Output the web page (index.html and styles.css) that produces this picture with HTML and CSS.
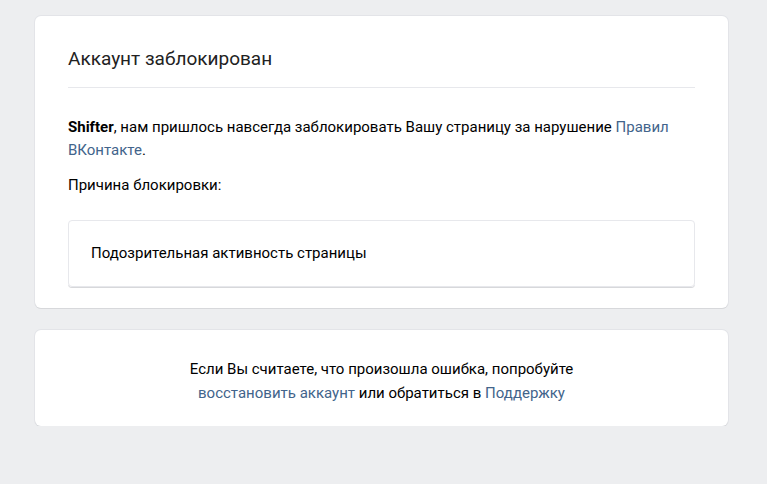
FILE: index.html
```html
<!DOCTYPE html>
<html lang="ru">
<head>
<meta charset="utf-8">
<link rel="stylesheet" href="styles.css">
</head>
<body>
<div class="page">
  <div class="card main">
    <h1 class="title">Аккаунт заблокирован</h1>
    <div class="content">
      <p class="msg"><b>Shifter</b>, нам пришлось навсегда заблокировать Вашу страницу за нарушение <a href="#">Правил ВКонтакте</a>.</p>
      <p class="reason-label">Причина блокировки:</p>
      <div class="reason">Подозрительная активность страницы</div>
    </div>
  </div>
  <div class="card help">
    <p>Если Вы считаете, что произошла ошибка, попробуйте<br><a href="#">восстановить аккаунт</a> или обратиться в <a href="#">Поддержку</a></p>
  </div>
</div>
</body>
</html>
```
FILE: styles.css
```css
html, body {
  margin: 0;
  padding: 0;
  background: #edeef0;
  font-family: Roboto, "Noto Sans", sans-serif;
  color: #000;
}
.page {
  width: 693px;
  margin-left: 35px;
  padding-top: 16px;
  display: flex;
  flex-direction: column;
  gap: 22px;
}
.card {
  background: #fff;
  border-radius: 6px;
  box-shadow: 0 1px 0 0 #d7d8db, 0 0 0 1px #e3e4e8;
}
.main {
  padding: 28px 33px 21px;
}
.title {
  margin: 0;
  font-size: 19px;
  font-weight: 400;
  line-height: 30px;
  padding-bottom: 13px;
  border-bottom: 1px solid #e7e8ec;
  color: #222;
}
.content {
  padding-top: 28px;
  font-size: 15px;
  line-height: 23px;
}
.content p {
  margin: 0;
}
.msg b {
  font-weight: 700;
}
a {
  color: #42648b;
  text-decoration: none;
}
.reason-label {
  margin-top: 12px !important;
}
.reason {
  margin-top: 23px;
  border: 1px solid #e7e8ec;
  border-radius: 4px;
  box-shadow: 0 1px 0 0 #d7d8db;
  padding: 21px 22px 21px;
  font-size: 15px;
  line-height: 23px;
}
.help {
  padding: 27px 20px 21px;
  text-align: center;
  font-size: 15px;
  line-height: 24px;
}
.help p {
  margin: 0;
}
```
